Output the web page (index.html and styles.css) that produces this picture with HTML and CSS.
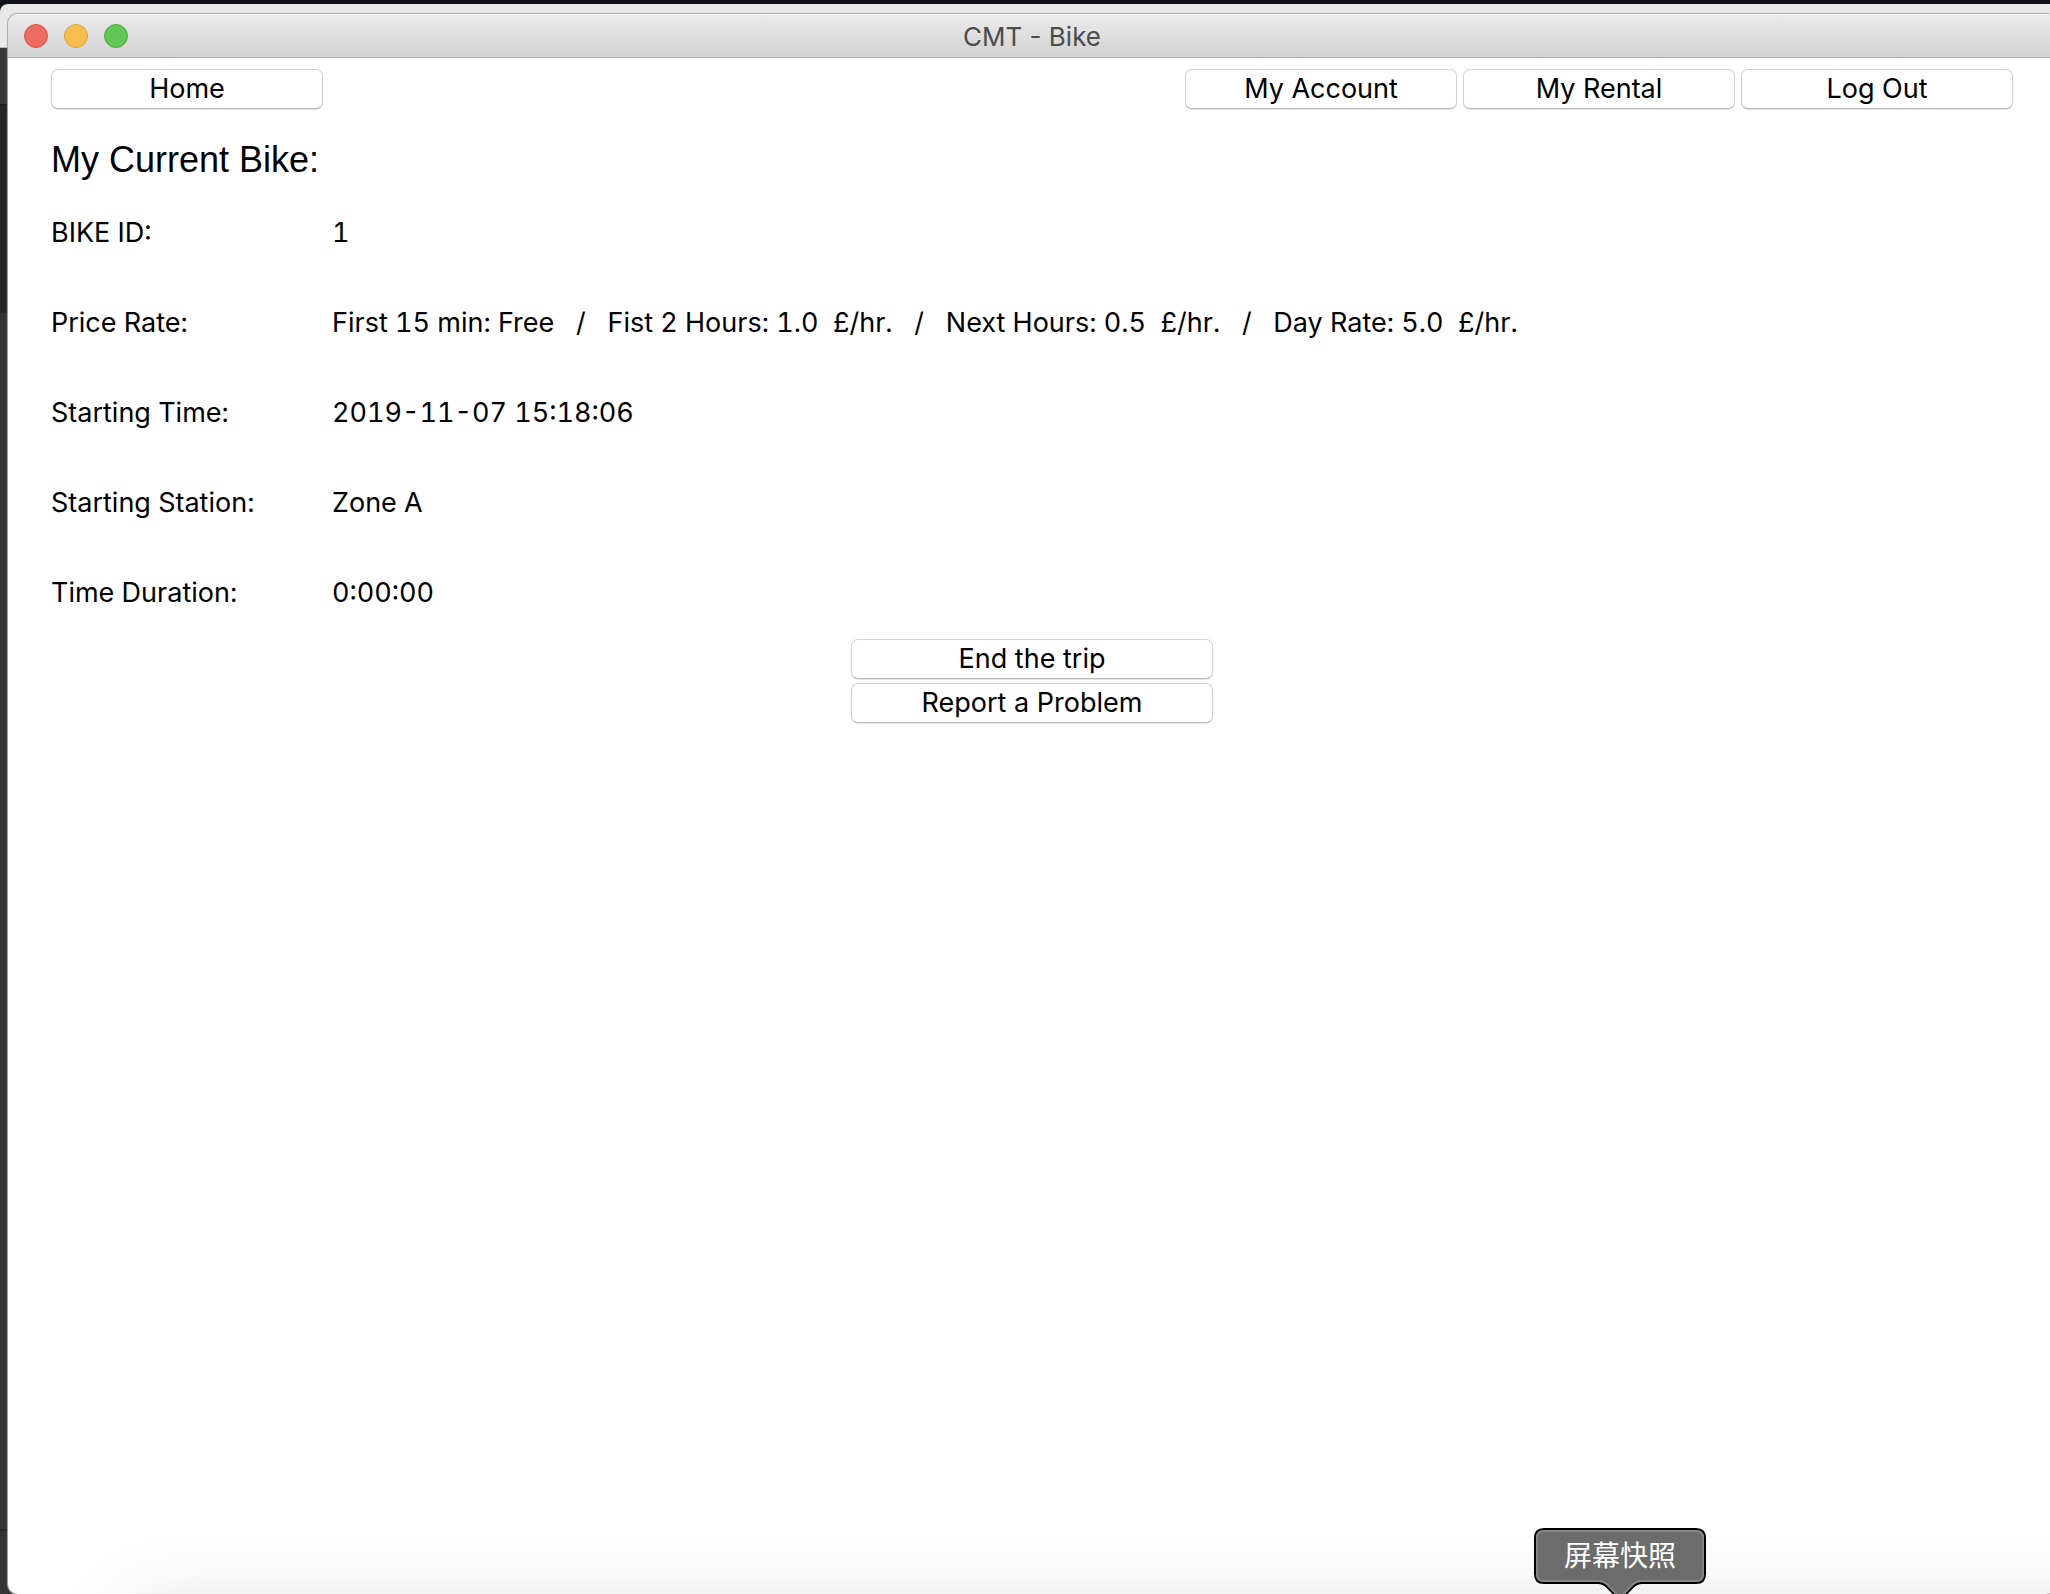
FILE: index.html
```
<!DOCTYPE html>
<html lang="en">
<head>
<meta charset="utf-8">
<title>CMT - Bike</title>
<link rel="stylesheet" href="styles.css">
</head>
<body>
<div class="desktop">
  <div class="back-window"></div>
  <main class="window">
    <header class="titlebar">
      <div class="lights">
        <button class="light close" aria-label="Close"></button>
        <button class="light minimize" aria-label="Minimize"></button>
        <button class="light maximize" aria-label="Zoom"></button>
      </div>
      <div class="title">CMT - Bike</div>
    </header>
    <div class="content">
      <nav class="nav">
        <button class="btn home">Home</button>
        <button class="btn">My Account</button>
        <button class="btn">My Rental</button>
        <button class="btn">Log Out</button>
      </nav>
      <h1 class="heading">My Current Bike:</h1>
      <table class="details">
        <tr><th scope="row">BIKE ID:</th><td>1</td></tr>
        <tr><th scope="row">Price Rate:</th><td>First 15 min: Free   /   Fist 2 Hours: 1.0  £/hr.   /   Next Hours: 0.5  £/hr.   /   Day Rate: 5.0  £/hr.</td></tr>
        <tr><th scope="row">Starting Time:</th><td>2019-11-07 15:18:06</td></tr>
        <tr><th scope="row">Starting Station:</th><td>Zone A</td></tr>
        <tr><th scope="row">Time Duration:</th><td>0:00:00</td></tr>
      </table>
      <div class="actions">
        <button class="btn">End the trip</button>
        <button class="btn">Report a Problem</button>
      </div>
    </div>
  </main>
  <div class="dock-shadow"></div>
  <div class="tooltip" role="tooltip" lang="zh">
    <svg class="bubble" viewBox="0 0 172 68" width="172" height="68" aria-hidden="true">
      <path class="bubble-edge" d="M10 1H162Q171 1 171 10V46Q171 55 162 55H108Q103 55 99 59L86 72L73 59Q69 55 64 55H10Q1 55 1 46V10Q1 1 10 1Z"/>
      <path class="bubble-rim" d="M10 3H162Q169 3 169 10V46Q169 53 162 53H107Q102 53 98 57L86 70L74 57Q70 53 65 53H10Q3 53 3 46V10Q3 3 10 3Z"/>
    </svg>
    <span class="tooltip-text">屏幕快照</span>
  </div>
</div>
</body>
</html>
```
FILE: styles.css
```
* { box-sizing: border-box; }

body {
  margin: 0;
  font-family: Inter, "Noto Sans CJK SC", sans-serif;
  font-size: 27px;
  line-height: 32px;
  color: #000;
}

.desktop {
  position: relative;
  min-height: 100vh;
  padding: 14px 0 0 8px;
  overflow: hidden;
  background: #10121c;
}

/* Window behind, visible along the top and left edges */
.back-window {
  position: absolute;
  inset: 4px 0 0 0;
  border-radius: 8px 0 0 0;
  background: linear-gradient(#e9e9e9 0 43px, #b8b8b8 43px 44px, #34383a 44px 100px, #191a1b 100px 102px, #242526 102px 309px, #333435 309px 1525px, #262728 1525px 1527px, #333435 1527px);
}

.window {
  position: relative;
  min-height: calc(100vh - 14px);
  margin-right: -6px;
  overflow: hidden;
  border-radius: 10px;
  background: #fff;
  box-shadow: 0 0 1px 1px #a8a8a8;
}

.titlebar {
  display: grid;
  grid-template-columns: 1fr auto 1fr;
  align-items: center;
  height: 44px;
  padding: 0 16px;
  border-top: 1px solid #f6f6f6;
  border-bottom: 1px solid #adadad;
  background: linear-gradient(#ebebeb, #d2d2d2);
}

.lights { display: flex; gap: 16px; }

.light {
  width: 24px;
  height: 24px;
  padding: 0;
  border: 1px solid;
  border-radius: 50%;
}

.close { background: #ed6b60; border-color: #d9554c; }
.minimize { background: #f5be4f; border-color: #dca13a; }
.maximize { background: #62c655; border-color: #4fa940; }

.title { padding-top: 2px; color: #4c4c4c; font-size: 26px; }

.content { padding: 11px 43px; }

.nav { display: flex; gap: 6px; }
.nav .btn { width: 272px; }
.nav .home { margin-right: auto; }

.btn {
  height: 40px;
  padding: 0;
  border: 1px solid #d2d2d2;
  border-bottom-color: #b9b9b9;
  border-radius: 7px;
  background: #fff;
  color: #000;
  font: inherit;
  box-shadow: 0 1px 1px #e4e4e4;
}

.heading {
  margin: 29px 0 0;
  font-family: "Liberation Sans", Arial, sans-serif;
  font-size: 36px;
  font-weight: 400;
  line-height: 44px;
}

.details {
  margin: 6px 0 1px;
  border-collapse: collapse;
  font-variant-numeric: tabular-nums;
}

.details th {
  width: 281px;
  height: 90px;
  padding: 0;
  font-weight: 400;
  text-align: left;
}

.details td { padding: 0; white-space: pre-wrap; }

.actions {
  display: flex;
  flex-direction: column;
  align-items: center;
  gap: 4px;
}

.actions .btn { width: 362px; }

.dock-shadow {
  position: absolute;
  top: 100%;
  left: 130px;
  right: -100px;
  height: 100px;
  box-shadow: 0 16px 80px rgba(0, 0, 0, 0.15);
}

.tooltip {
  position: absolute;
  right: 344px;
  bottom: -2px;
  width: 172px;
  height: 68px;
  padding-top: 12px;
  color: #fff;
  font-size: 28px;
  text-align: center;
}

.bubble { position: absolute; top: 0; left: 0; }
.bubble-edge { fill: #6c6c6c; stroke: #000; stroke-width: 2; }
.bubble-rim { fill: none; stroke: #868686; stroke-width: 2; }
.tooltip-text { position: relative; }
```
